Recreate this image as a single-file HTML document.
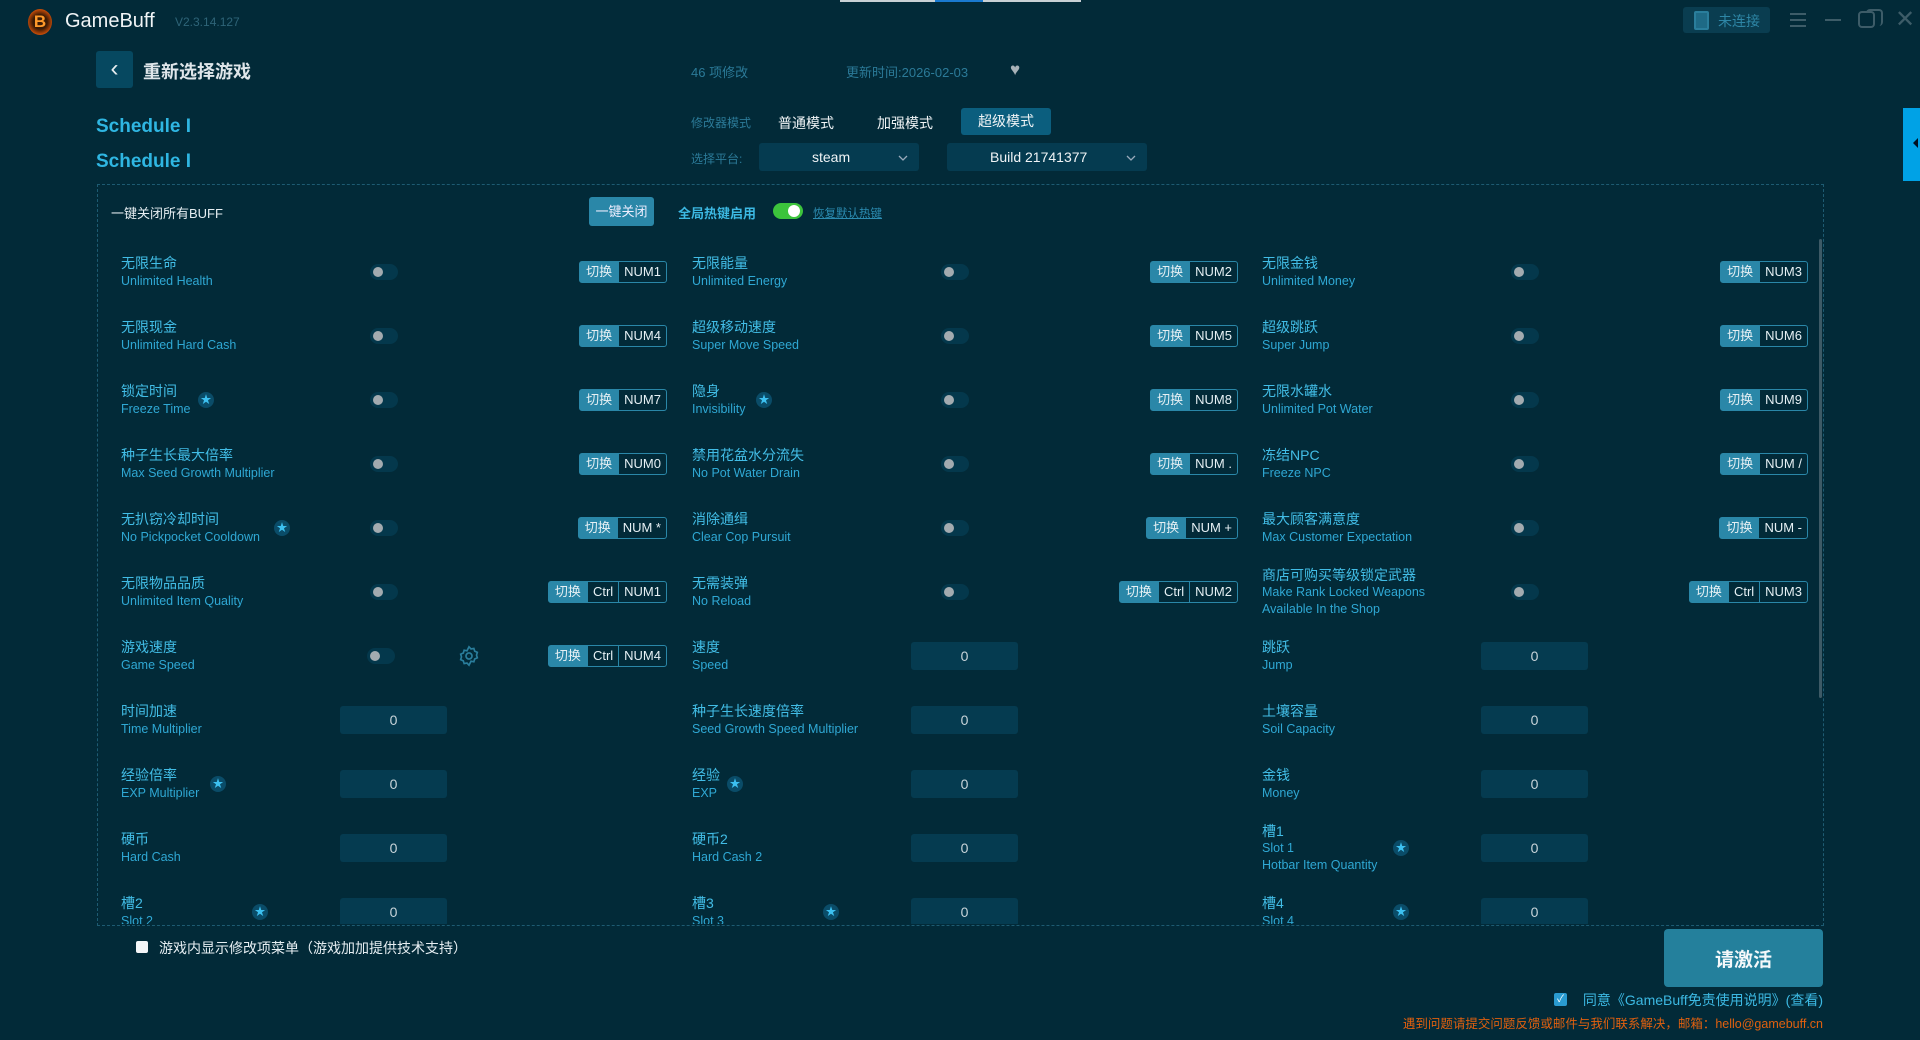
<!DOCTYPE html>
<html><head><meta charset="utf-8"><style>
*{margin:0;padding:0;box-sizing:border-box}
body{width:1920px;height:1040px;background:#022a38;font-family:"Liberation Sans","Noto Sans CJK SC",sans-serif;position:relative;overflow:hidden;color:#3cb8e2}
.a{position:absolute;white-space:nowrap}
.c{position:absolute;width:571px;height:1px}
.nm{position:absolute;left:0;top:-18px;line-height:18px;white-space:nowrap}
.nm b{display:block;font-weight:normal;font-size:14px;color:#42bde6}
.nm i{display:block;font-style:normal;font-size:12.5px;color:#2fa8d4}
.tg{position:absolute;left:249px;top:-8px;width:28px;height:16px;border-radius:8px;background:#04384c}
.tg:after{content:"";position:absolute;left:3px;top:3px;width:10px;height:10px;border-radius:50%;background:#a3abb0}
.hk{position:absolute;right:25px;top:-11px;height:22px;border:1px solid #2a87a8;border-radius:3px;display:flex;font-size:13px;color:#e6f0f4;line-height:20px}
.hk span{padding:0 5px;border-left:1px solid #2a87a8}
.hk span:first-child{background:#2a87a8;border:none;padding:0 6px}
.in{position:absolute;left:219px;top:-14px;width:107px;height:28px;background:#053b50;border-radius:3px;color:#c9d5da;text-align:center;line-height:28px;font-size:14px}
.st{position:absolute;top:-8px;width:16px;height:16px;border-radius:50%;background:#0a4c68;color:#3cc0f0;font-size:11px;line-height:16px;text-align:center}
.gear{position:absolute;left:337px;top:-11px}
</style></head><body>
<!-- title bar -->
<div class="a" style="left:840px;top:0;width:241px;height:2px;background:#c8d0d4"></div>
<div class="a" style="left:935px;top:0;width:48px;height:2px;background:#1a7ad0"></div>
<div class="a" style="left:28px;top:9px;width:24px;height:26px;border-radius:50%;background:radial-gradient(circle,#3a1a05 40%,#c04a08 70%,#f07a10 90%);color:#ff9a2a;font-weight:bold;font-size:17px;text-align:center;line-height:26px">B</div>
<div class="a" style="left:65px;top:9px;font-size:20px;color:#f0f4f6;line-height:24px">GameBuff</div>
<div class="a" style="left:175px;top:15px;font-size:12px;color:#2e6478">V2.3.14.127</div>
<div class="a" style="left:1683px;top:7px;width:87px;height:26px;background:#0a3d50;border-radius:3px"></div>
<div class="a" style="left:1694px;top:11px;width:15px;height:19px;border:2px solid #2a7e9c;border-radius:2px;background:#1e6a86"></div>
<div class="a" style="left:1718px;top:11px;font-size:14px;color:#2e86a6">未连接</div>
<div class="a" style="left:1790px;top:13px;width:16px;height:2px;background:#3d5c68;box-shadow:0 6px 0 #3d5c68,0 12px 0 #3d5c68"></div>
<div class="a" style="left:1825px;top:19px;width:16px;height:2px;background:#3d5c68"></div>
<div class="a" style="left:1858px;top:11px;width:17px;height:17px;border:2px solid #3d5c68;border-radius:4px"></div>
<div class="a" style="left:1866px;top:9px;width:17px;height:17px;border-top:2px solid #3d5c68;border-right:2px solid #3d5c68;border-radius:4px"></div>
<div class="a" style="left:1895px;top:5px;font-size:24px;color:#3d5c68">✕</div>
<div class="a" style="left:1903px;top:108px;width:17px;height:73px;background:#00a2e6"></div>
<div class="a" style="left:1908px;top:138px;width:0;height:0;border:5px solid transparent;border-right:5px solid #012;"></div>
<!-- header -->
<div class="a" style="left:96px;top:51px;width:37px;height:37px;background:#064860;border-radius:3px;color:#e8eef0;font-size:24px;text-align:center;line-height:35px">&#x2039;</div>
<div class="a" style="left:143px;top:58px;font-size:18px;font-weight:bold;color:#dfe6ea">重新选择游戏</div>
<div class="a" style="left:96px;top:116px;font-size:19px;font-weight:bold;color:#2fb6e2">Schedule I</div>
<div class="a" style="left:96px;top:151px;font-size:19px;font-weight:bold;color:#2fb6e2">Schedule I</div>
<div class="a" style="left:691px;top:62px;font-size:13px;color:#2b7a98">46 项修改</div>
<div class="a" style="left:846px;top:62px;font-size:13px;color:#2b7a98">更新时间:2026-02-03</div>
<div class="a" style="left:1010px;top:60px;font-size:17px;color:#a8b2b8">♥</div>
<div class="a" style="left:691px;top:114px;font-size:12px;color:#2b7a98">修改器模式</div>
<div class="a" style="left:778px;top:113px;font-size:14px;color:#f0f4f6">普通模式</div>
<div class="a" style="left:877px;top:113px;font-size:14px;color:#f0f4f6">加强模式</div>
<div class="a" style="left:961px;top:108px;width:90px;height:27px;background:#0b5e7e;border-radius:3px;color:#f0f4f6;font-size:14px;text-align:center;line-height:27px">超级模式</div>
<div class="a" style="left:691px;top:150px;font-size:12px;color:#2b7a98">选择平台:</div>
<div class="a" style="left:759px;top:143px;width:160px;height:28px;background:#053b50;border-radius:3px;color:#f0f4f6;font-size:14px;line-height:28px;padding-left:53px">steam<svg style="position:absolute;right:11px;top:12px" width="10" height="6" viewBox="0 0 10 6"><path d="M1 1l4 4 4-4" stroke="#9ab" fill="none" stroke-width="1.3"/></svg></div>
<div class="a" style="left:947px;top:143px;width:200px;height:28px;background:#053b50;border-radius:3px;color:#f0f4f6;font-size:14px;line-height:28px;padding-left:43px">Build 21741377<svg style="position:absolute;right:11px;top:12px" width="10" height="6" viewBox="0 0 10 6"><path d="M1 1l4 4 4-4" stroke="#9ab" fill="none" stroke-width="1.3"/></svg></div>
<!-- panel -->
<div class="a" style="left:97px;top:184px;width:1727px;height:742px;border:1px dashed #1d5b72"></div>
<div class="a" style="left:1819px;top:239px;width:3px;height:459px;background:#3d5a66;border-radius:2px"></div>
<div class="a" style="left:111px;top:203px;font-size:13px;color:#e6eef2">一键关闭所有BUFF</div>
<div class="a" style="left:589px;top:197px;width:65px;height:29px;background:#2a87a8;border-radius:3px;color:#eef;font-size:13px;text-align:center;line-height:29px">一键关闭</div>
<div class="a" style="left:678px;top:203px;font-size:13px;font-weight:bold;color:#3cb8e2">全局热键启用</div>
<div class="a" style="left:773px;top:203px;width:30px;height:16px;border-radius:8px;background:#3cc43c"><div style="position:absolute;right:3px;top:2px;width:12px;height:12px;border-radius:50%;background:#fff"></div></div>
<div class="a" style="left:813px;top:205px;font-size:11.5px;color:#2b8bb0;text-decoration:underline">恢复默认热键</div>
<div class="a" style="left:98px;top:236px;width:1715px;height:688px;overflow:hidden">
<div style="position:absolute;left:-98px;top:-236px;width:1920px;height:1040px">
<div class="c" style="left:121px;top:272px"><div class="nm"><b>无限生命</b><i>Unlimited Health</i></div><div class="tg"></div><div class="hk"><span>切换</span><span>NUM1</span></div></div>
<div class="c" style="left:692px;top:272px"><div class="nm"><b>无限能量</b><i>Unlimited Energy</i></div><div class="tg"></div><div class="hk"><span>切换</span><span>NUM2</span></div></div>
<div class="c" style="left:1262px;top:272px"><div class="nm"><b>无限金钱</b><i>Unlimited Money</i></div><div class="tg"></div><div class="hk"><span>切换</span><span>NUM3</span></div></div>
<div class="c" style="left:121px;top:336px"><div class="nm"><b>无限现金</b><i>Unlimited Hard Cash</i></div><div class="tg"></div><div class="hk"><span>切换</span><span>NUM4</span></div></div>
<div class="c" style="left:692px;top:336px"><div class="nm"><b>超级移动速度</b><i>Super Move Speed</i></div><div class="tg"></div><div class="hk"><span>切换</span><span>NUM5</span></div></div>
<div class="c" style="left:1262px;top:336px"><div class="nm"><b>超级跳跃</b><i>Super Jump</i></div><div class="tg"></div><div class="hk"><span>切换</span><span>NUM6</span></div></div>
<div class="c" style="left:121px;top:400px"><div class="nm"><b>锁定时间</b><i>Freeze Time</i></div><div class="st" style="left:77px">★</div><div class="tg"></div><div class="hk"><span>切换</span><span>NUM7</span></div></div>
<div class="c" style="left:692px;top:400px"><div class="nm"><b>隐身</b><i>Invisibility</i></div><div class="st" style="left:64px">★</div><div class="tg"></div><div class="hk"><span>切换</span><span>NUM8</span></div></div>
<div class="c" style="left:1262px;top:400px"><div class="nm"><b>无限水罐水</b><i>Unlimited Pot Water</i></div><div class="tg"></div><div class="hk"><span>切换</span><span>NUM9</span></div></div>
<div class="c" style="left:121px;top:464px"><div class="nm"><b>种子生长最大倍率</b><i>Max Seed Growth Multiplier</i></div><div class="tg"></div><div class="hk"><span>切换</span><span>NUM0</span></div></div>
<div class="c" style="left:692px;top:464px"><div class="nm"><b>禁用花盆水分流失</b><i>No Pot Water Drain</i></div><div class="tg"></div><div class="hk"><span>切换</span><span>NUM .</span></div></div>
<div class="c" style="left:1262px;top:464px"><div class="nm"><b>冻结NPC</b><i>Freeze NPC</i></div><div class="tg"></div><div class="hk"><span>切换</span><span>NUM /</span></div></div>
<div class="c" style="left:121px;top:528px"><div class="nm"><b>无扒窃冷却时间</b><i>No Pickpocket Cooldown</i></div><div class="st" style="left:153px">★</div><div class="tg"></div><div class="hk"><span>切换</span><span>NUM *</span></div></div>
<div class="c" style="left:692px;top:528px"><div class="nm"><b>消除通缉</b><i>Clear Cop Pursuit</i></div><div class="tg"></div><div class="hk"><span>切换</span><span>NUM +</span></div></div>
<div class="c" style="left:1262px;top:528px"><div class="nm"><b>最大顾客满意度</b><i>Max Customer Expectation</i></div><div class="tg"></div><div class="hk"><span>切换</span><span>NUM -</span></div></div>
<div class="c" style="left:121px;top:592px"><div class="nm"><b>无限物品品质</b><i>Unlimited Item Quality</i></div><div class="tg"></div><div class="hk"><span>切换</span><span>Ctrl</span><span>NUM1</span></div></div>
<div class="c" style="left:692px;top:592px"><div class="nm"><b>无需装弹</b><i>No Reload</i></div><div class="tg"></div><div class="hk"><span>切换</span><span>Ctrl</span><span>NUM2</span></div></div>
<div class="c" style="left:1262px;top:592px"><div class="nm" style="top:-25px;line-height:17px"><b>商店可购买等级锁定武器</b><i>Make Rank Locked Weapons</i><i>Available In the Shop</i></div><div class="tg"></div><div class="hk"><span>切换</span><span>Ctrl</span><span>NUM3</span></div></div>
<div class="c" style="left:121px;top:656px"><div class="nm"><b>游戏速度</b><i>Game Speed</i></div><div class="tg" style="left:246px"></div>
<svg class="gear" width="22" height="22" viewBox="0 0 24 24" fill="none" stroke="#2a7e9c" stroke-width="1.8"><path d="M12 2l2.2 2.3 3.1-.6.9 3 2.9 1.3-.9 3 .9 3-2.9 1.3-.9 3-3.1-.6L12 22l-2.2-2.3-3.1.6-.9-3-2.9-1.3.9-3-.9-3 2.9-1.3.9-3 3.1.6z"/><circle cx="12" cy="12" r="3.3"/></svg>
<div class="hk"><span>切换</span><span>Ctrl</span><span>NUM4</span></div></div>
<div class="c" style="left:692px;top:656px"><div class="nm"><b>速度</b><i>Speed</i></div><div class="in">0</div></div>
<div class="c" style="left:1262px;top:656px"><div class="nm"><b>跳跃</b><i>Jump</i></div><div class="in">0</div></div>
<div class="c" style="left:121px;top:720px"><div class="nm"><b>时间加速</b><i>Time Multiplier</i></div><div class="in">0</div></div>
<div class="c" style="left:692px;top:720px"><div class="nm"><b>种子生长速度倍率</b><i>Seed Growth Speed Multiplier</i></div><div class="in">0</div></div>
<div class="c" style="left:1262px;top:720px"><div class="nm"><b>土壤容量</b><i>Soil Capacity</i></div><div class="in">0</div></div>
<div class="c" style="left:121px;top:784px"><div class="nm"><b>经验倍率</b><i>EXP Multiplier</i></div><div class="st" style="left:89px">★</div><div class="in">0</div></div>
<div class="c" style="left:692px;top:784px"><div class="nm"><b>经验</b><i>EXP</i></div><div class="st" style="left:35px">★</div><div class="in">0</div></div>
<div class="c" style="left:1262px;top:784px"><div class="nm"><b>金钱</b><i>Money</i></div><div class="in">0</div></div>
<div class="c" style="left:121px;top:848px"><div class="nm"><b>硬币</b><i>Hard Cash</i></div><div class="in">0</div></div>
<div class="c" style="left:692px;top:848px"><div class="nm"><b>硬币2</b><i>Hard Cash 2</i></div><div class="in">0</div></div>
<div class="c" style="left:1262px;top:848px"><div class="nm" style="top:-25px;line-height:17px"><b>槽1</b><i>Slot 1</i><i>Hotbar Item Quantity</i></div><div class="st" style="left:131px">★</div><div class="in">0</div></div>
<div class="c" style="left:121px;top:912px"><div class="nm"><b>槽2</b><i>Slot 2</i></div><div class="st" style="left:131px">★</div><div class="in">0</div></div>
<div class="c" style="left:692px;top:912px"><div class="nm"><b>槽3</b><i>Slot 3</i></div><div class="st" style="left:131px">★</div><div class="in">0</div></div>
<div class="c" style="left:1262px;top:912px"><div class="nm"><b>槽4</b><i>Slot 4</i></div><div class="st" style="left:131px">★</div><div class="in">0</div></div>
</div></div>
<!-- bottom -->
<div class="a" style="left:136px;top:941px;width:12px;height:12px;background:#f4f6f8;border-radius:2px"></div>
<div class="a" style="left:159px;top:938px;font-size:14px;color:#e6eef2">游戏内显示修改项菜单（游戏加加提供技术支持）</div>
<div class="a" style="left:1664px;top:929px;width:159px;height:58px;background:#24809c;border-radius:4px;color:#f4f8fa;font-size:19px;font-weight:bold;text-align:center;line-height:64px">请激活</div>
<div class="a" style="left:1554px;top:993px;width:13px;height:13px;background:#2a9bd0;border-radius:2px;color:#fff;font-size:10px;text-align:center;line-height:13px">✓</div>
<div class="a" style="right:97px;top:990px;font-size:14px;color:#3cb8e2">同意《GameBuff免责使用说明》(查看)</div>
<div class="a" style="right:97px;top:1013px;font-size:12.5px;color:#e0600f">遇到问题请提交问题反馈或邮件与我们联系解决，邮箱：hello@gamebuff.cn</div>
</body></html>
